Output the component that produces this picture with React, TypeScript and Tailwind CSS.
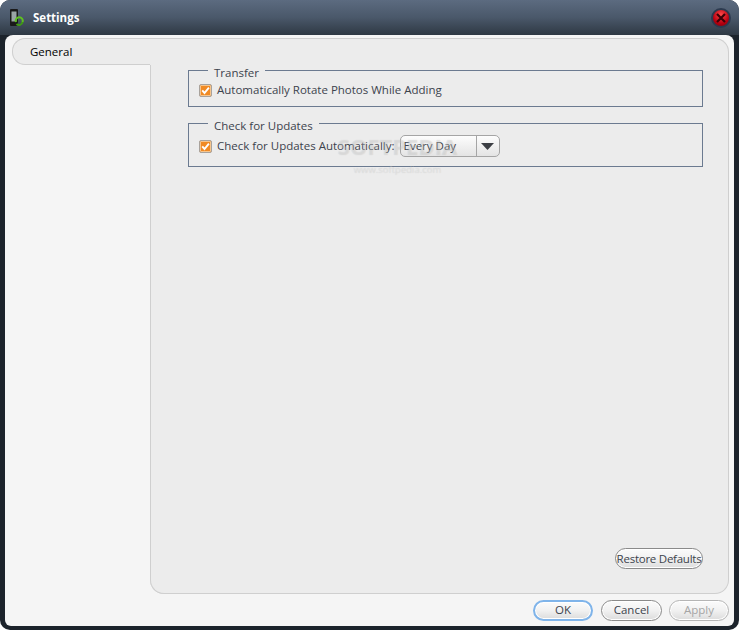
function Check() {
  return (
    <span className="relative flex h-[13px] w-[13px] shrink-0 items-center justify-center rounded-[2px] border border-[#a8a29c] bg-[#f08a24] shadow-[inset_0_0_0_1px_#f7c58c]">
      <svg width="11" height="11" viewBox="0 0 11 11" fill="none">
        <path d="M2.2 5.4 4.5 8 8.9 2.6" stroke="#fff" strokeWidth="1.9" />
      </svg>
    </span>
  );
}

function Pill({ label, className }: { label: string; className: string }) {
  return (
    <button className={"flex h-[21px] items-center justify-center whitespace-nowrap rounded-[11px] border bg-gradient-to-b from-[#fbfbfb] via-[#f1f1f1] to-[#dcdcdc] shadow-[inset_0_0_0_1px_#fff] " + className}>
      {label}
    </button>
  );
}

export default function App() {
  return (
    <div className="h-[630px] w-[740px] overflow-hidden bg-white font-['Open_Sans','Liberation_Sans',sans-serif] text-[11.5px] leading-4 text-[#3c434c]">
      <div className="flex h-[630px] w-[739px] flex-col rounded-[10px] bg-[#1c232b] pl-[5px] pr-[5px] pb-[4px]">
        <header className="-mx-[5px] flex h-[35px] shrink-0 items-center rounded-t-[10px] bg-gradient-to-b from-[#5c6b80] via-[#4a586a] to-[#2f3944] pl-[9px] pr-[8px]">
          <svg width="15" height="20" viewBox="0 0 15 20" className="mr-[9px]">
            <rect x="1" y="1" width="8" height="17" rx="1" fill="#1a1a1a" />
            <rect x="2.5" y="3.5" width="5" height="10" fill="#9aa5a5" />
            <path d="M7 14a3.5 3.5 0 1 1 6.5 0" fill="none" stroke="#5fc21f" strokeWidth="2" />
            <path d="M13.5 14a3.5 3.5 0 0 1-6 2" fill="none" stroke="#3f9a12" strokeWidth="2" />
          </svg>
          <span className="text-[11.5px] font-bold text-white">Settings</span>
          <span className="ml-auto flex h-[20px] w-[20px] items-center justify-center rounded-full border-2 border-[#2c3a4f] bg-[radial-gradient(circle_at_50%_30%,#ff4a4a,#b80010_60%,#7a0008)]">
            <svg width="12" height="12" viewBox="0 0 12 12">
              <path d="M2 2 10 10M10 2 2 10" stroke="#3a0006" strokeWidth="2.2" />
            </svg>
          </span>
        </header>
        <div className="flex min-h-0 flex-1 flex-col rounded-t-[8px] rounded-b-[6px] bg-[#f5f5f5] pl-[7px] pr-[5px] pt-[3px]">
          <div className="flex h-[556px] shrink-0">
            <div className="flex w-[138px] shrink-0 flex-col">
              <div className="flex h-[27px] items-center rounded-tl-[13px] rounded-bl-[13px] border border-r-0 border-[#cfcfcf] bg-[#ececec] pl-[17px] text-black">
                General
              </div>
            </div>
            <main className="relative flex min-w-0 flex-1 flex-col rounded-tr-[14px] rounded-bl-[14px] rounded-br-[14px] border border-l-0 border-[#cfcfcf] bg-[#ececec] pb-[24px] pl-[38px] pr-[25px] pt-[24px]">
              <div className="absolute left-0 top-[26px] bottom-[-1px] w-[14px] rounded-bl-[14px] border-b border-l border-[#cfcfcf] bg-[#ececec]" />
              <fieldset className="relative h-[44px] border border-[#6b7a90] pl-[10px]">
                <legend className="relative top-[3px] ml-[9px] px-[6px] leading-[14px]">Transfer</legend>
                <label className="mt-[3px] flex h-[20px] items-center gap-[5px]"><Check />Automatically Rotate Photos While Adding</label>
              </fieldset>
              <fieldset className="relative mt-[9px] h-[51px] border border-[#6b7a90] pl-[10px]">
                <legend className="relative top-[3px] ml-[9px] px-[6px] leading-[14px]">Check for Updates</legend>
                <label className="mt-[3px] flex h-[26px] items-center gap-[5px]">
                  <Check />
                  <span>Check for Updates Automatically:</span>
                  <span className="flex h-[22px] w-[100px] overflow-hidden rounded-[5px] border border-[#a5a5a5] bg-gradient-to-b from-[#fdfdfd] to-[#e4e4e4]">
                    <span className="flex-1 pl-[3px] leading-[20px]">Every Day</span>
                    <span className="flex w-[23px] items-center justify-center border-l border-[#a5a5a5]">
                      <svg width="13" height="7" viewBox="0 0 13 7"><path d="M0 0H13L6.5 7Z" fill="#3c3f44" /></svg>
                    </span>
                  </span>
                </label>
              </fieldset>
              <div className="pointer-events-none absolute left-[184px] top-[96px] flex w-[127px] flex-col items-center leading-none text-white/30 [text-shadow:0_0_1px_rgba(0,0,0,0.15)]">
                <span className="text-[22px] font-bold">SOFTPEDIA</span>
                <span className="mt-[8px] text-[9.5px]">www.softpedia.com</span>
              </div>
              <Pill label="Restore Defaults" className="mt-auto w-[88px] self-end border-[#8a8a8a] tracking-[-0.25px]" />
            </main>
          </div>
          <footer className="flex flex-1 items-center justify-end gap-[8px]">
            <Pill label="OK" className="w-[60px] border-2 border-[#7fb4ea]" />
            <Pill label="Cancel" className="w-[61px] border-[#8a8a8a]" />
            <Pill label="Apply" className="-ml-[1px] w-[60px] border-[#b5b5b5] text-[#a5a5a5]" />
          </footer>
        </div>
      </div>
    </div>
  );
}
